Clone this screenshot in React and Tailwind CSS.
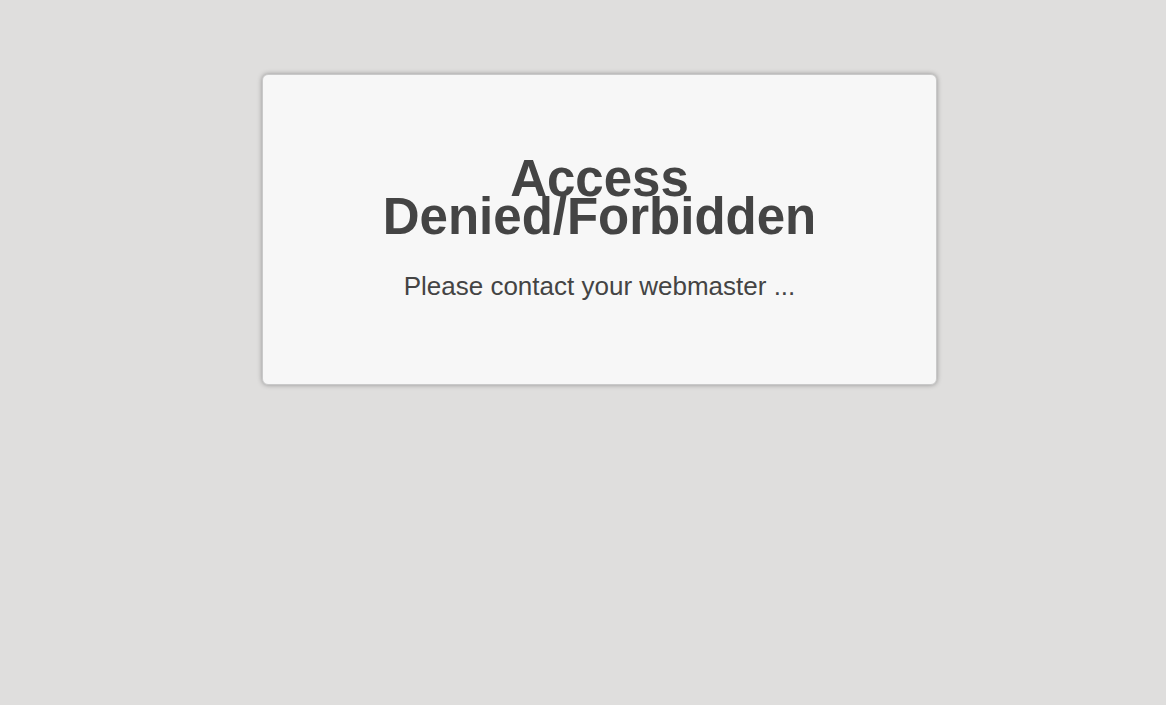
export default function App() {
  return (
    <div className="min-h-[705px] w-full bg-[#dfdedd] pt-[74px] pl-[262px] font-['Liberation_Sans',Arial,sans-serif] text-[#444]">
      <div className="flex h-[311px] w-[675px] flex-col items-center rounded-[6px] border border-[#c9c9c9] bg-[#f7f7f7] pt-[85px] text-center shadow-[0_0_5px_rgba(0,0,0,0.35)]">
        <h1 className="w-[460px] text-[51px] font-bold leading-[38px]">Access Denied/Forbidden</h1>
        <p className="mt-[35px] text-[26px] leading-[30px]">Please contact your webmaster ...</p>
      </div>
    </div>
  )
}
